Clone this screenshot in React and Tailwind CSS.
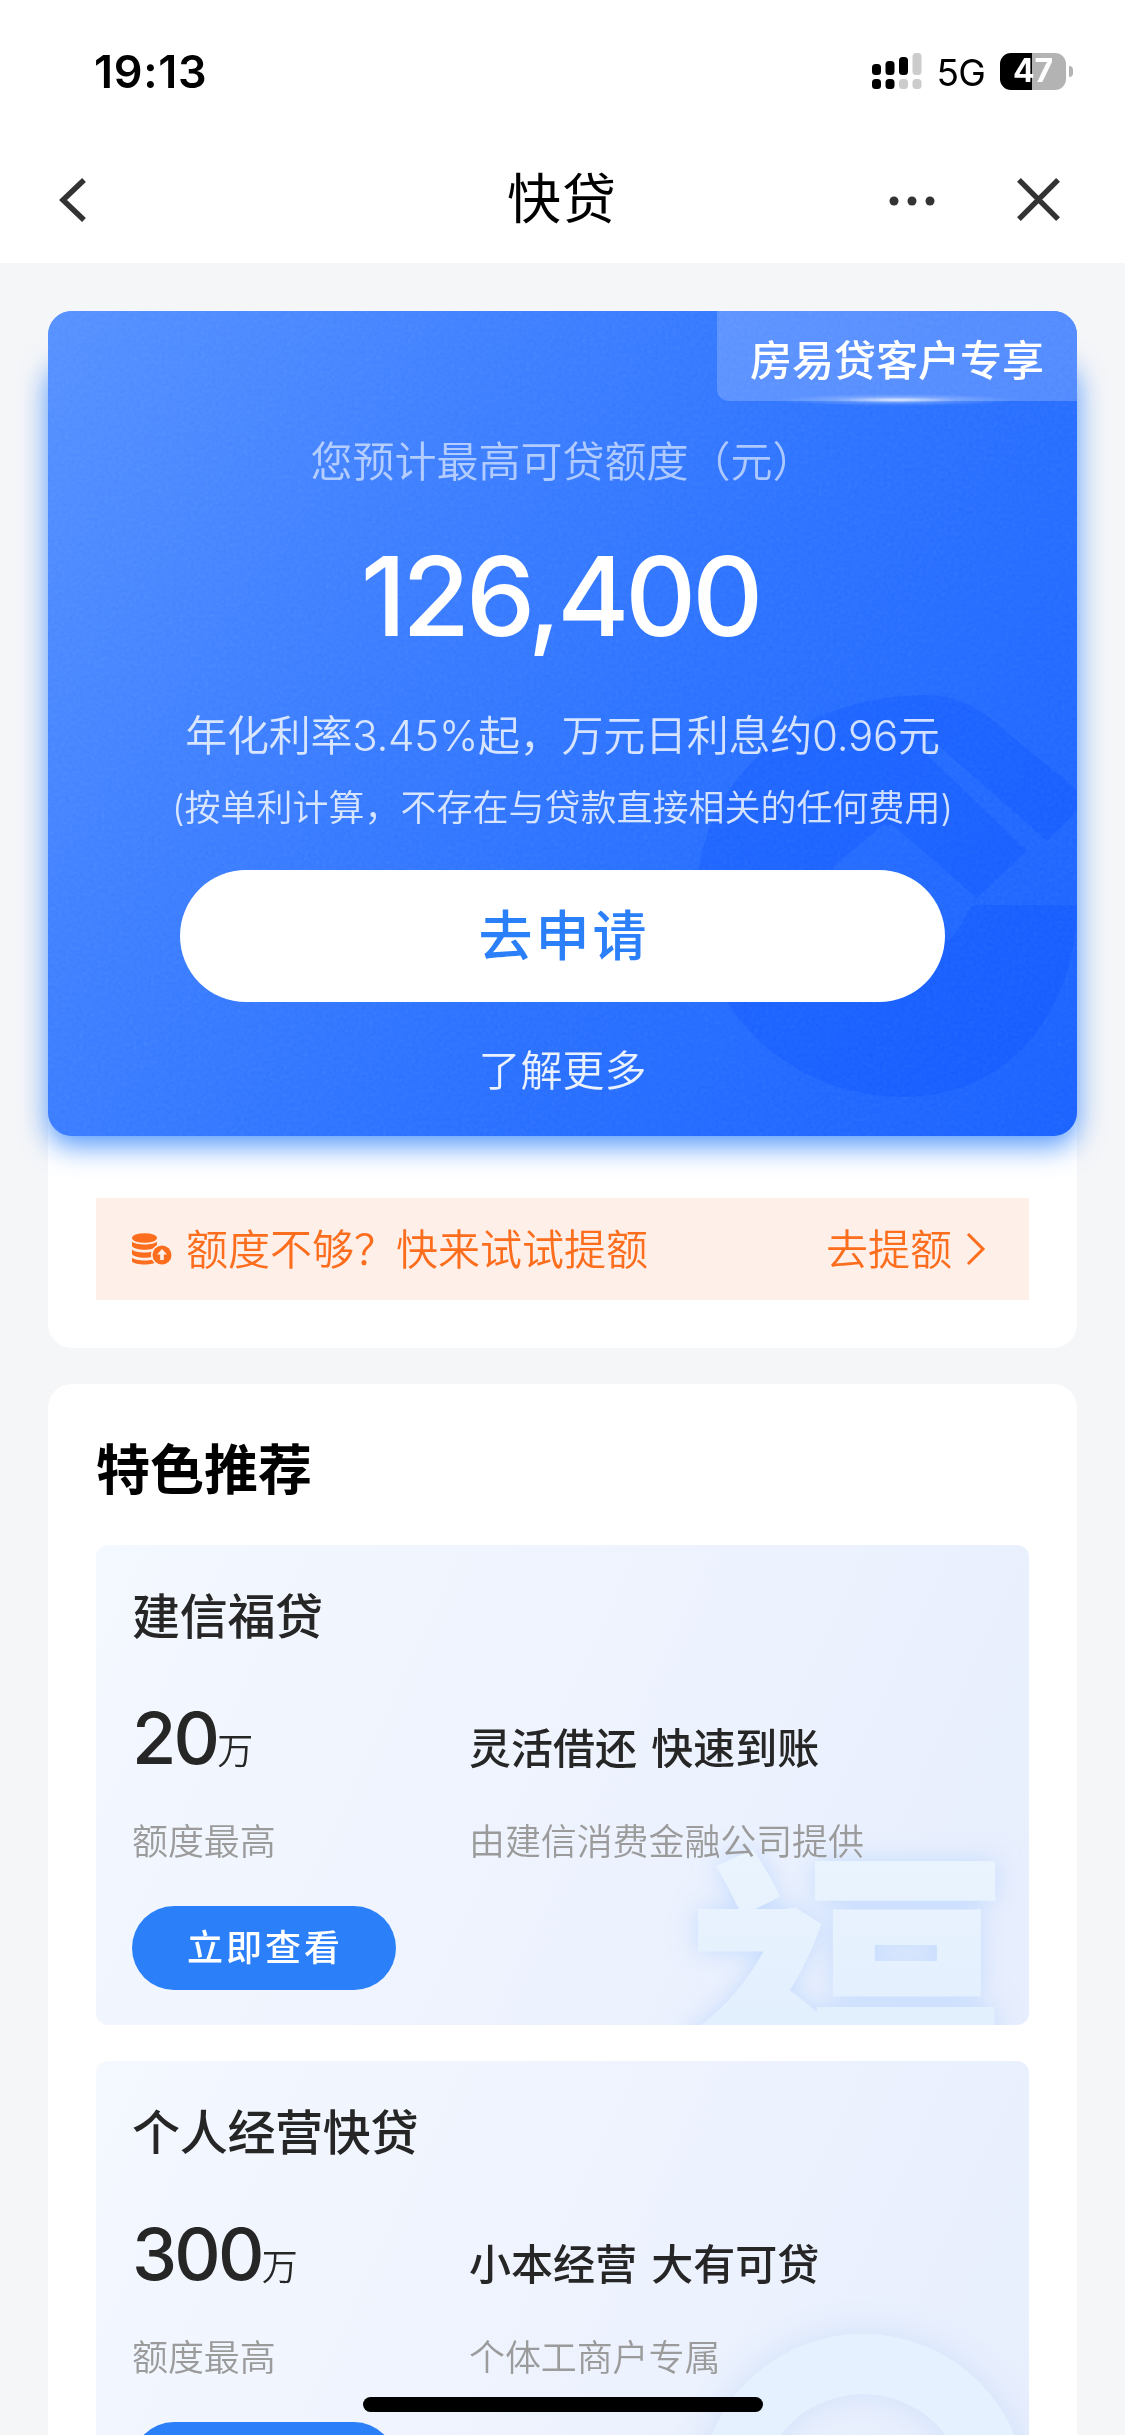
const FONT = "font-['Inter','Noto_Sans_CJK_SC',sans-serif]"

const PRODUCTS = [
  { name: '建信福贷', amount: '20', slogan: '灵活借还 快速到账', note: '由建信消费金融公司提供', mark: 'fu' },
  { name: '个人经营快贷', amount: '300', slogan: '小本经营 大有可贷', note: '个体工商户专属', mark: 'ring' },
]

function Signal() {
  return (
    <svg width="50" height="37" viewBox="0 0 50 37">
      <rect x="0" y="11" width="9" height="11" rx="3.5" />
      <rect x="13.5" y="8" width="9" height="14" rx="3.5" />
      <rect x="27" y="4" width="9" height="18" rx="3.5" />
      <rect x="40.5" y="0" width="9" height="22" rx="3.5" fill="#cccccc" />
      <rect x="0" y="26" width="9" height="10" rx="3.5" />
      <rect x="13.5" y="26" width="9" height="10" rx="3.5" />
      <rect x="27" y="26" width="9" height="10" rx="3.5" fill="#cccccc" />
      <rect x="40.5" y="26" width="9" height="10" rx="3.5" fill="#cccccc" />
    </svg>
  )
}

function StatusBar() {
  return (
    <div className="flex h-[142px] items-center justify-between pl-[94px] pr-[52px]">
      <span className="text-[45px] font-semibold leading-none tracking-[0.7px] text-black">19:13</span>
      <div className="flex items-center">
        <Signal />
        <span className="ml-[15px] mt-[3px] text-[37px] leading-none tracking-[-0.8px] text-black">5G</span>
        <div className="ml-[15px] flex h-[37px] w-[66px] items-center justify-center rounded-[11px] bg-[linear-gradient(90deg,#000_48%,#b3b3b3_48%)] text-[32px] font-bold leading-none text-white">
          47
        </div>
        <div className="ml-[3px] h-[11px] w-[4px] rounded-r-full bg-[#b3b3b3]" />
      </div>
    </div>
  )
}

function NavBar() {
  return (
    <div className="grid h-[121px] grid-cols-3 items-center pb-[6px] pl-[58px] pr-[65px]">
      <svg width="30" height="46" viewBox="0 0 30 46" fill="none" stroke="#333" strokeWidth="5.5">
        <path d="M26 3 5 23l21 20" />
      </svg>
      <h1 className="pl-[6px] text-center text-[54px] leading-none tracking-[1px] text-black">快贷</h1>
      <div className="flex items-center justify-end">
        <svg className="mt-[2px]" width="46" height="12" viewBox="0 0 46 12" fill="#333">
          <circle cx="5" cy="6" r="4.5" />
          <circle cx="23" cy="6" r="4.5" />
          <circle cx="41" cy="6" r="4.5" />
        </svg>
        <svg className="ml-[82px]" width="43" height="43" viewBox="0 0 44 44" stroke="#333" strokeWidth="5.5">
          <path d="M2 2l40 40M42 2 2 42" />
        </svg>
      </div>
    </div>
  )
}

// bank emblem in the lower right corner of the card
function Emblem() {
  return (
    <svg className="absolute left-[632px] top-[359px]" width="397" height="450" viewBox="680 670 397 450">
      <path
        fill="#0046ff"
        fillOpacity="0.22"
        d="M923 695C795 697 697 780 697 897c0 113 93 200 208 200 96 0 170-76 172-192H972l-14 25c-30 40-95 10-125-63l50-42 10 0 84 73 50-47-107-103 10-10 117 103 30-30V790l-87-72c-20-16-42-23-67-23Z"
      />
    </svg>
  )
}

function Grain() {
  return (
    <svg className="absolute inset-0 h-full w-full rounded-[24px] opacity-30 mix-blend-soft-light">
      <filter id="grain">
        <feTurbulence type="fractalNoise" baseFrequency="0.28" numOctaves="2" />
        <feColorMatrix type="saturate" values="0" />
      </filter>
      <rect width="100%" height="100%" filter="url(#grain)" />
    </svg>
  )
}

function CreditCard() {
  return (
    <div className="relative h-[825px] rounded-[24px] bg-[linear-gradient(125deg,#5590ff_0%,#3d7eff_30%,#2a70ff_58%,#1a60ff_100%)] text-white">
      <div className="absolute inset-x-0 bottom-0 top-[44px] rounded-[24px] shadow-[0_10px_28px_rgba(43,128,250,0.8)]" />
      <div className="absolute inset-0 rounded-[24px] bg-[linear-gradient(125deg,#5590ff_0%,#3d7eff_30%,#2a70ff_58%,#1a60ff_100%)] opacity-80" />
      <Emblem />
      <Grain />
      <div className="absolute right-0 top-0 flex h-[90px] w-[360px] items-center justify-center rounded-bl-[12px] rounded-tr-[24px] bg-white/20 pt-[8px] text-[42px] font-medium">
        房易贷客户专享
        <span className="absolute bottom-[-5px] left-[60px] h-[12px] w-[240px] bg-[radial-gradient(closest-side,rgba(255,255,255,0.8),rgba(255,255,255,0.2)_50%,transparent)]" />
      </div>
      <div className="relative flex flex-col items-center pt-[121px]">
        <p className="text-[42px] font-[350] leading-[60px] text-white/60">您预计最高可贷额度（元）</p>
        <p className="mt-[44px] pr-[5px] text-[110px] font-[450] leading-[120px] tracking-[-4px]">126,400</p>
        <p className="mt-[50px] text-[42px] font-[350] leading-[60px] tracking-[-0.25px] text-white/80">
          年化利率3.45%起，万元日利息约0.96元
        </p>
        <p className="mt-[15px] text-[36px] font-[350] leading-[54px] text-white/80">
          (按单利计算，不存在与贷款直接相关的任何费用)
        </p>
        <button className="mt-[35px] h-[132px] w-[765px] rounded-full bg-white pl-[3px] text-[54px] font-medium tracking-[3px] text-[#2b80fa]">
          去申请
        </button>
        <a className="mt-[39px] text-[42px] font-[350] leading-[60px] text-white/90">了解更多</a>
      </div>
    </div>
  )
}

function CoinsIcon() {
  return (
    <svg width="41" height="33" viewBox="0 0 41 33">
      <g fill="#fd6d1e">
        <ellipse cx="13.5" cy="5" rx="12.5" ry="4.8" />
        <path d="M1 8.5c3 4 22 4 25 0v4.5c-3 5-22 5-25 0zM1 16.5c3 4 22 4 25 0v4.5c-3 5-22 5-25 0zM1 24.5c3 4 22 4 25 0v4c-3 4-22 4-25 0z" />
        <circle cx="31" cy="22" r="11" fill="#fef0e8" />
        <circle cx="31" cy="22" r="9.5" />
      </g>
      <path d="M31 16l-5 5.5h3.2V27h3.6v-5.500H36z" fill="#fef0e8" />
    </svg>
  )
}

function RaiseLimit() {
  return (
    <div className="mx-[48px] mt-[62px] flex h-[102px] items-center bg-[#fef0e8] pl-[35px] pr-[43px] text-[42px] font-[350] text-[#fd6d1e]">
      <CoinsIcon />
      <span className="ml-[14px]">额度不够？快来试试提额</span>
      <span className="ml-auto">去提额</span>
      <svg className="ml-[14px]" width="20" height="34" viewBox="0 0 20 34" fill="none" stroke="#fd6d1e" strokeWidth="3">
        <path d="M2 2l15 15L2 32" />
      </svg>
    </div>
  )
}

function Watermark({ mark }) {
  if (mark === 'fu') {
    return (
      <span className="absolute left-[587px] top-[301px] bg-gradient-to-b from-[#eaf4fe] to-[#dcebfd] bg-clip-text text-[328px] font-black leading-none text-transparent drop-shadow-[0_0_12px_rgba(170,205,255,0.6)]">
        福
      </span>
    )
  }
  return (
    <span className="absolute left-[603px] top-[273px] h-[328px] w-[328px] rounded-full border-[60px] border-[#e5f1fe] shadow-[0_0_36px_#cfe0fb,inset_0_0_36px_#cfe0fb]" />
  )
}

function Product({ name, amount, slogan, note, mark }) {
  return (
    <article className="relative h-[480px] overflow-hidden rounded-[12px] bg-[linear-gradient(115deg,#f4f8ff_0%,#eff4fe_40%,#e7eefd_100%)] px-[36px] pt-[42px]">
      <Watermark mark={mark} />
      <div className="relative">
        <h3 className="text-[48px] font-medium leading-[60px] tracking-[-0.3px] text-[#262626]">{name}</h3>
        <div className="mt-[51px] grid grid-cols-[337px_1fr] items-baseline text-[#262626]">
          <p className="text-[72px] font-medium leading-[80px] tracking-[-2.8px]">
            {amount}
            <span className="text-[36px] font-[350] tracking-normal">万</span>
          </p>
          <p className="text-[42px] font-medium [word-spacing:3px]">{slogan}</p>
        </div>
        <div className="mt-[26px] grid grid-cols-[337px_1fr] text-[36px] font-[350] leading-[50px] tracking-[-0.1px] text-[#9b9b9b]">
          <p>额度最高</p>
          <p>{note}</p>
        </div>
        <button className="mt-[39px] h-[84px] w-[264px] rounded-full bg-[#2b80fa] pl-[2px] text-[36px] font-medium tracking-[3px] text-white">
          立即查看
        </button>
      </div>
    </article>
  )
}

export default function App() {
  return (
    <main lang="zh-CN" className={`relative h-[2435px] w-[1125px] overflow-hidden bg-[#f5f6f8] ${FONT}`}>
      <header className="bg-white">
        <StatusBar />
        <NavBar />
      </header>
      <div className="flex flex-col gap-[36px] px-[48px] pt-[48px]">
        <section className="rounded-[24px] bg-white pb-[48px]">
          <CreditCard />
          <RaiseLimit />
        </section>
        <section className="rounded-[24px] bg-white px-[48px] pb-[48px] pt-[48px]">
          <h2 className="text-[54px] font-bold leading-[78px] text-black">特色推荐</h2>
          <div className="mt-[35px] flex flex-col gap-[36px]">
            {PRODUCTS.map(p => (
              <Product key={p.name} {...p} />
            ))}
          </div>
        </section>
      </div>
      <div className="absolute bottom-[23px] left-[363px] h-[15px] w-[400px] rounded-full bg-black" />
    </main>
  )
}
